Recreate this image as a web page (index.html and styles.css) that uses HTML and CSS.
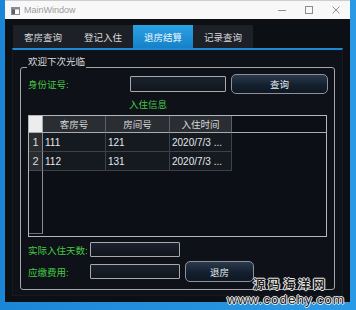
FILE: index.html
```html
<!DOCTYPE html>
<html lang="zh-CN">
<head>
<meta charset="utf-8">
<title>MainWindow</title>
<link rel="stylesheet" href="styles.css">
</head>
<body>
<div class="window">
  <div class="titlebar">
    <svg class="app-icon" width="9" height="8" viewBox="0 0 9 8"><rect x="0.5" y="0.5" width="8" height="7" fill="#fff" stroke="#8a8e94"/><rect x="1" y="1" width="3" height="6" fill="#5b6068"/><rect x="1" y="1" width="7" height="1.5" fill="#8a8e94"/></svg>
    <span class="title">MainWindow</span>
    <div class="controls">
      <svg class="ctl" width="10" height="10" viewBox="0 0 10 10"><path d="M1 5.5h8" stroke="#8c8c8c" stroke-width="1"/></svg>
      <svg class="ctl" width="10" height="10" viewBox="0 0 10 10"><rect x="1.5" y="1.5" width="7" height="7" fill="none" stroke="#8c8c8c" stroke-width="1"/></svg>
      <svg class="ctl" width="10" height="10" viewBox="0 0 10 10"><path d="M1.5 1.5l7 7M8.5 1.5l-7 7" stroke="#8c8c8c" stroke-width="1"/></svg>
    </div>
  </div>
  <div class="client">
    <div class="tabs">
      <div class="tab">客房查询</div>
      <div class="tab">登记入住</div>
      <div class="tab active">退房结算</div>
      <div class="tab">记录查询</div>
    </div>
    <div class="pane">
      <div class="group">
        <div class="group-title">欢迎下次光临</div>
        <div class="row row-id">
          <span class="label label-id">身份证号:</span>
          <div class="input input-id"></div>
          <button class="btn btn-query">查询</button>
        </div>
        <div class="caption">入住信息</div>
        <div class="grid">
          <div class="cell corner"></div>
          <div class="cell hdr">客房号</div>
          <div class="cell hdr">房间号</div>
          <div class="cell hdr">入住时间</div>
          <div class="cell hdr-fill"></div>
          <div class="cell rh">1</div>
          <div class="cell data">111</div>
          <div class="cell data">121</div>
          <div class="cell data">2020/7/3 ...</div>
          <div class="cell empty"></div>
          <div class="cell rh">2</div>
          <div class="cell data">112</div>
          <div class="cell data">131</div>
          <div class="cell data">2020/7/3 ...</div>
          <div class="cell empty"></div>
          <div class="cell rh-fill"></div>
          <div class="cell empty span4"></div>
        </div>
        <div class="row row-days">
          <span class="label label-short">实际入住天数:</span>
          <div class="input input-short"></div>
        </div>
        <div class="row row-fee">
          <span class="label label-short">应缴费用:</span>
          <div class="input input-short"></div>
          <button class="btn btn-checkout">退房</button>
        </div>
      </div>
    </div>
  </div>
</div>
<div class="watermark">
  <div class="wm-cn">源码海洋网</div>
  <div class="wm-en">www.codehy.com</div>
</div>
</body>
</html>
```
FILE: styles.css
```css
* { box-sizing: border-box; }
html, body { margin: 0; padding: 0; }
body {
  width: 356px;
  height: 310px;
  overflow: hidden;
  position: relative;
  background: linear-gradient(90deg, #1c86d6 0%, #2a9ae6 100%);
  font-family: "Liberation Sans", "Noto Sans CJK SC", sans-serif;
  font-size: 10px;
}
.window {
  margin-left: 5px;
  width: 345px;
  height: 302px;
  background: #0c0f14;
}
.titlebar {
  height: 19px;
  background: #f8f8f8;
  border-top: 1px solid #c9ced4;
  display: flex;
  align-items: center;
  padding-left: 6px;
}
.app-icon { display: block; margin-top: 1px; }
.title {
  margin-left: 4px;
  font-size: 9px;
  color: #9a9a9a;
}
.controls {
  margin-left: auto;
  display: flex;
  gap: 17px;
  padding-right: 9px;
}
.ctl { display: block; }
.client {
  height: 283px;
  padding-top: 6px;
  background: #0c0f14;
}
.tabs {
  display: flex;
  margin-left: 8px;
  height: 23px;
}
.tab {
  width: 60px;
  display: flex;
  align-items: center;
  justify-content: center;
  background: #1d2026;
  color: #d6d8da;
  font-size: 9.5px;
}
.tab.active {
  background: linear-gradient(#2aa2e6, #1680c8);
  color: #eef7ff;
}
.pane {
  margin-left: 7px;
  width: 331px;
  height: 248px;
  border-top: 2px solid #1a8ad2;
  border-left: 1px solid #161a20;
  border-right: 1px solid #161a20;
  border-bottom: 1px solid #161a20;
  background: #0e1117;
  padding-top: 17px;
  padding-left: 7px;
}
.group {
  position: relative;
  width: 315px;
  height: 223px;
  border: 1px solid #a3a7ac;
  border-radius: 3px;
  padding-left: 7px;
}
.group-title {
  position: absolute;
  top: -12px;
  left: 6px;
  line-height: 12px;
  padding: 0 1px;
  background: #0e1117;
  color: #dcdcdc;
  font-size: 9.5px;
}
.row {
  display: flex;
  align-items: center;
}
.label {
  color: #45c845;
  font-size: 9.5px;
  white-space: nowrap;
}
.row-id { margin-top: 6px; height: 20px; }
.label-id { width: 102px; }
.input {
  border: 1px solid #a6aaaf;
  border-radius: 1px;
  background: linear-gradient(#1b222c, #11161d);
}
.input-id { width: 96px; height: 16px; }
.btn {
  font-family: inherit;
  font-size: 9.5px;
  color: #e8ecf0;
  border: 1px solid #8c9298;
  border-radius: 5px;
  background: linear-gradient(#2a3a4c, #142030 55%, #0f1822);
  padding: 0;
}
.btn-query { margin-left: 5px; width: 97px; height: 20px; }
.caption {
  margin-top: 5px;
  line-height: 12px;
  padding-left: 101px;
  color: #45c845;
  font-size: 9.5px;
}
.grid {
  margin-top: 4px;
  width: 299px;
  height: 122px;
  border: 1px solid #b2b6ba;
  background: #0c0f15;
  display: grid;
  grid-template-columns: 14px 63px 64px 62px 1fr;
  grid-template-rows: 17px 19px 19px 1fr;
}
.cell {
  display: flex;
  align-items: center;
  font-size: 10px;
  white-space: nowrap;
  overflow: hidden;
}
.corner {
  background: #ececec;
  border-bottom: 1px solid #a8acb0;
  border-right: 1px solid #a8acb0;
}
.hdr {
  justify-content: center;
  background: #2a2d32;
  color: #d8dadc;
  font-size: 9.5px;
  border-right: 1px solid #5c6066;
  border-bottom: 1px solid #a8acb0;
}
.hdr-fill { border-bottom: 1px solid #a8acb0; }
.rh {
  justify-content: center;
  background: #2a2c30;
  color: #d8dadc;
  font-size: 11px;
  border-right: 1px solid #8a8e92;
  border-bottom: 1px solid #44484e;
}
.data {
  background: #151920;
  color: #e6e8ea;
  padding-left: 2px;
  border-right: 1px solid #3e4248;
  border-bottom: 1px solid #3e4248;
}
.rh-fill {
  border-right: 1px solid #8a8e92;
  border-bottom: 1px solid #6a6e72;
  margin-bottom: 2px;
}
.span4 { grid-column: span 4; }
.row-days { margin-top: 5px; height: 15px; }
.label-short { width: 62px; }
.input-short { width: 90px; height: 15px; }
.row-fee { margin-top: 4px; height: 21px; }
.btn-checkout { margin-left: 5px; width: 69px; height: 21px; }
.watermark {
  position: absolute;
  left: 227px;
  top: 275px;
  width: 129px;
  color: #1e1e1e;
  text-shadow: 0 0 1px #fff, 1px 0 0 #e8e8e8, -1px 0 0 #e8e8e8, 0 1px 0 #e8e8e8, 0 -1px 0 #e8e8e8;
}
.wm-cn {
  margin-left: 26px;
  font-family: "Noto Sans CJK SC", sans-serif;
  font-size: 12px;
  line-height: normal;
  font-weight: bold;
  letter-spacing: 3px;
}
.wm-en {
  font-family: "Liberation Sans", sans-serif;
  font-size: 13.5px;
  line-height: normal;
  letter-spacing: 1px;
}
```
